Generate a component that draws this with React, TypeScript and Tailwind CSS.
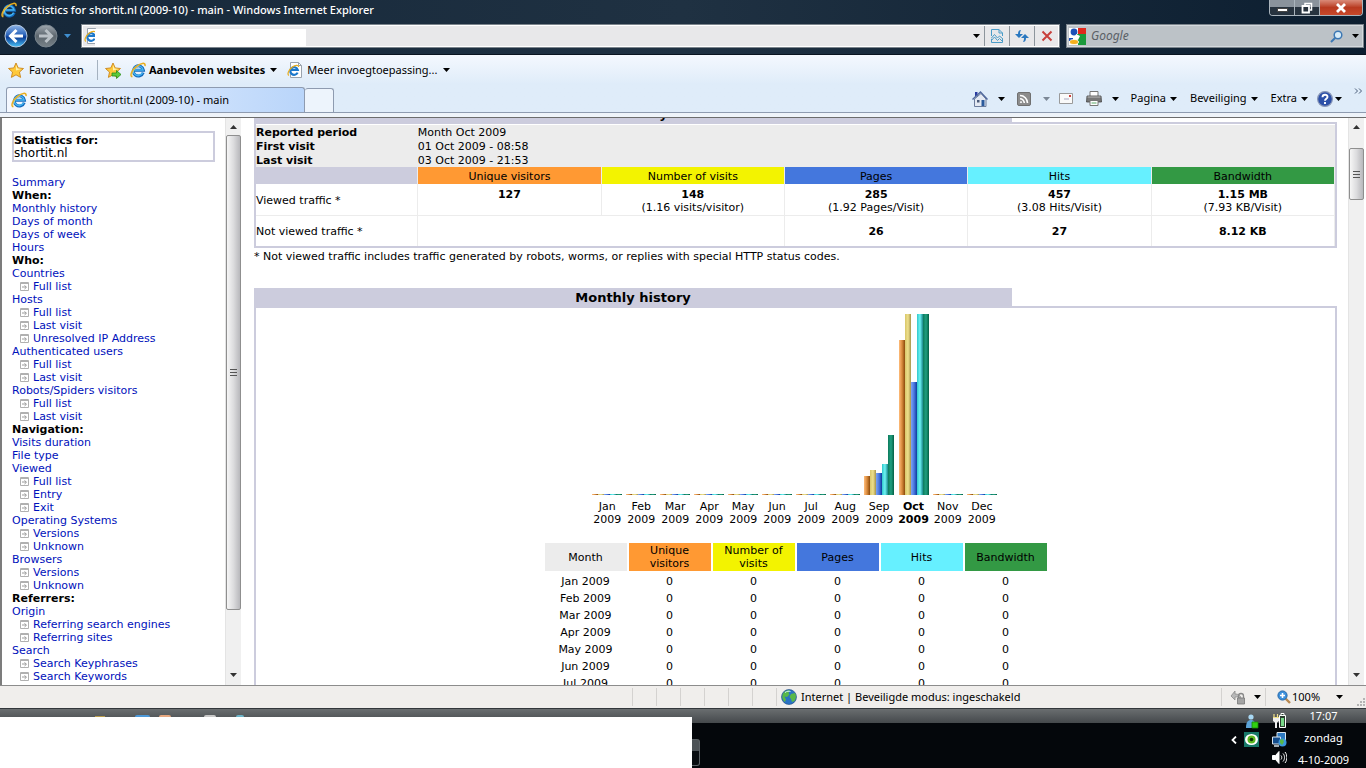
import React from "react";

type MenuItem = {
  label: string;
  kind: "link" | "sub" | "heading";
};

type Month = {
  name: string;
  bars: number[];
  current?: boolean;
};

const heading = (label: string): MenuItem => ({ label, kind: "heading" });
const link = (label: string): MenuItem => ({ label, kind: "link" });
const sub = (label: string): MenuItem => ({ label, kind: "sub" });

const menu: MenuItem[] = [
  link("Summary"),
  heading("When:"),
  link("Monthly history"),
  link("Days of month"),
  link("Days of week"),
  link("Hours"),
  heading("Who:"),
  link("Countries"),
  sub("Full list"),
  link("Hosts"),
  sub("Full list"),
  sub("Last visit"),
  sub("Unresolved IP Address"),
  link("Authenticated users"),
  sub("Full list"),
  sub("Last visit"),
  link("Robots/Spiders visitors"),
  sub("Full list"),
  sub("Last visit"),
  heading("Navigation:"),
  link("Visits duration"),
  link("File type"),
  link("Viewed"),
  sub("Full list"),
  sub("Entry"),
  sub("Exit"),
  link("Operating Systems"),
  sub("Versions"),
  sub("Unknown"),
  link("Browsers"),
  sub("Versions"),
  sub("Unknown"),
  heading("Referrers:"),
  link("Origin"),
  sub("Referring search engines"),
  sub("Referring sites"),
  link("Search"),
  sub("Search Keyphrases"),
  sub("Search Keywords"),
];

const empty = [1, 1, 1, 1, 1];

const months: Month[] = [
  { name: "Jan", bars: empty },
  { name: "Feb", bars: empty },
  { name: "Mar", bars: empty },
  { name: "Apr", bars: empty },
  { name: "May", bars: empty },
  { name: "Jun", bars: empty },
  { name: "Jul", bars: empty },
  { name: "Aug", bars: empty },
  { name: "Sep", bars: [19, 25, 22, 31, 60] },
  { name: "Oct", bars: [155, 181, 113, 181, 181], current: true },
  { name: "Nov", bars: empty },
  { name: "Dec", bars: empty },
];

const barColors = [
  "from-[#ffbd7a] via-[#d98a3c] to-[#8a4a08]",
  "from-[#d8c66a] via-[#eee08c] to-[#a8954a]",
  "from-[#7ea4f4] via-[#4a78e0] to-[#0c3a9c]",
  "from-[#30c8cc] via-[#6cf4f4] to-[#18888c]",
  "from-[#0c7a5c] via-[#20a080] to-[#046044]",
];

const columns = [
  { label: "Unique visitors", color: "bg-[#ff9933]" },
  { label: "Number of visits", color: "bg-[#f3f300]" },
  { label: "Pages", color: "bg-[#4477dd]" },
  { label: "Hits", color: "bg-[#66f0ff]" },
  { label: "Bandwidth", color: "bg-[#339944]" },
];

const viewed = [
  ["127", ""],
  ["148", "(1.16 visits/visitor)"],
  ["285", "(1.92 Pages/Visit)"],
  ["457", "(3.08 Hits/Visit)"],
  ["1.15 MB", "(7.93 KB/Visit)"],
];

const Caret = ({ className = "text-black" }: { className?: string }) => (
  <svg viewBox="0 0 7 4" className={`w-[7px] h-1 shrink-0 ${className}`} fill="currentColor">
    <path d="M0 0h7L3.5 4z" />
  </svg>
);

const IeLogo = ({ className = "w-4 h-4" }: { className?: string }) => (
  <svg viewBox="0 0 16 16" className={`shrink-0 ${className}`} fill="none">
    <path d="M13.2 10.6A5.1 5.1 0 1 1 13.4 8.2H4.2" stroke="#1269bd" strokeWidth="3" />
    <path d="M12.6 10.8A4.9 4.9 0 1 1 13 7.9H4.6" stroke="#45b4f0" strokeWidth="1.5" />
    <path d="M2.4 14.8C-.8 14 2 7.600 6.500 4.300 10.500 1.200 15.800-.3 15 4.200" stroke="#e8ae20" strokeWidth="1.500" />
    <path d="M2.200 13.800c-.6-3 2.800-7.600 6.600-9.900" stroke="#ffe37a" strokeWidth=".6" />
  </svg>
);

const PageLogo = () => (
  <svg viewBox="0 0 16 16" className="w-4 h-4 shrink-0" fill="none">
    <path d="M3.500.5h8l3 3v12h-11z" fill="#fff" stroke="#9aa3ad" />
    <path d="M11.500.5v3h3" stroke="#9aa3ad" />
    <path d="M10.600 10.600A3.800 3.800 0 1 1 10.800 8H3.500" stroke="#1b78cc" strokeWidth="2.200" />
    <path d="M1.800 13.500C-.2 12 2 7.600 5 5.200 8 3.200 12 2.400 11.600 5" stroke="#e8ae20" strokeWidth="1.200" />
  </svg>
);

const Star = ({ add }: { add?: boolean }) => (
  <svg viewBox="0 0 17 17" className="w-[17px] h-[17px] shrink-0">
    <path d="M8 1l2.200 4.900 5.300.6-4 3.600 1.100 5.300L8 12.800l-4.600 2.600 1.100-5.300-4-3.600 5.300-.6z" fill="#ffc93a" stroke="#c9851a" strokeWidth=".9" />
    <path d="M8 3l1.500 3.600 3.800.4L8 8.500z" fill="#fff0a8" />
    {add && <path d="M7 11h4.500V8.500l4.500 4-4.500 4V14H7z" fill="#5dcb3c" stroke="#2b8a18" strokeWidth=".8" />}
  </svg>
);

const Globe = () => (
  <svg viewBox="0 0 16 16" className="w-4 h-4 shrink-0">
    <circle cx="8" cy="8" r="7.500" fill="#2a72c4" stroke="#1d4a80" strokeWidth=".6" />
    <path d="M2 4.500C4 1.500 7 .9 9 1.300L7.500 4l1 1.500L6 8 3.500 7.500 5 10.500 4 13C1.500 11 .5 8 2 4.500zM10 5l4-1c1.500 2.500 1.200 5.500-.5 8l-2.500 1-1-3-1.500-2z" fill="#58b848" />
    <path d="M4 3.500C6 2 8 2 9.500 2.600" stroke="#d6f2ff" strokeWidth="1" fill="none" />
  </svg>
);

const NavButtons = () => (
  <div className="flex items-center w-[77px] pl-1 gap-[6px]">
    <button aria-label="Terug">
      <svg viewBox="0 0 24 24" className="w-6 h-6">
        <defs>
          <linearGradient id="back" x1="0" y1="0" x2="0" y2="1">
            <stop offset="0" stopColor="#8fb6e8" />
            <stop offset=".45" stopColor="#2a64bc" />
            <stop offset=".55" stopColor="#0a3a94" />
            <stop offset="1" stopColor="#4ac4f8" />
          </linearGradient>
        </defs>
        <circle cx="12" cy="12" r="11" fill="url(#back)" stroke="#b8cbe0" />
        <path d="M12.500 6L6.500 12l6 6M7 12h12" stroke="#fff" strokeWidth="3" fill="none" />
      </svg>
    </button>
    <button aria-label="Vooruit">
      <svg viewBox="0 0 24 24" className="w-6 h-6">
        <defs>
          <linearGradient id="fwd" x1="0" y1="0" x2="0" y2="1">
            <stop offset="0" stopColor="#a0a8b0" />
            <stop offset=".5" stopColor="#5c666e" />
            <stop offset="1" stopColor="#788288" />
          </linearGradient>
        </defs>
        <circle cx="12" cy="12" r="11" fill="url(#fwd)" stroke="#7a868f" />
        <path d="M11.500 6l6 6-6 6M17 12H5" stroke="#b9c0c6" strokeWidth="3" fill="none" />
      </svg>
    </button>
    <button aria-label="Recente pagina's">
      <Caret className="text-[#3f8fd0]" />
    </button>
  </div>
);

const WindowButtons = () => (
  <div className="flex h-4 mr-[3px] border border-t-0 border-[#aab4bc] rounded-b-[4px] overflow-hidden">
    <button aria-label="Minimaliseren" className="w-[25px] flex items-center justify-center border-r border-[#aab4bc] bg-linear-to-b from-[#8a939c] from-50% to-[#27333f] to-50%">
      <span className="w-[11px] h-1 mt-1 bg-white border border-[#444]" />
    </button>
    <button aria-label="Verkleinen" className="w-[25px] flex items-center justify-center border-r border-[#aab4bc] bg-linear-to-b from-[#8a939c] from-50% to-[#27333f] to-50%">
      <svg viewBox="0 0 12 12" className="w-3 h-3" fill="none">
        <path d="M4 3V1.500h6.500V8H9" stroke="#fff" strokeWidth="1.500" />
        <path d="M1.500 4h6.500v6.500H1.500z" stroke="#fff" strokeWidth="1.800" />
        <path d="M4 6.500h1.500V8H4z" fill="#333" />
      </svg>
    </button>
    <button aria-label="Sluiten" className="w-[42px] flex items-center justify-center bg-linear-to-b from-[#d98a78] via-[#b83a20] to-[#c8482a]">
      <svg viewBox="0 0 12 10" className="w-3 h-[10px]">
        <path d="M2 1l8 8M10 1L2 9" stroke="#fff" strokeWidth="2.800" />
      </svg>
    </button>
  </div>
);

const AddressRow = () => (
  <div className="flex items-center h-[30px] pb-[6px] pr-[2px] gap-1">
    <NavButtons />
    <div className="flex flex-1 h-6 border border-[#7b848c] bg-[#e8e8ea] outline outline-1 -outline-offset-2 outline-white">
      <div className="flex flex-1 items-center pl-[2px]">
        <PageLogo />
        <input aria-label="Adres" className="w-[211px] h-[17px] -ml-[5px] mt-[2px] bg-white z-10 outline-none" />
      </div>
      <button aria-label="Adressen" className="w-4 flex items-center justify-center">
        <Caret />
      </button>
      <button aria-label="Compatibiliteitsweergave" className="w-[25px] flex items-center justify-center border-l border-[#8d959c]">
        <svg viewBox="0 0 12 14" className="w-3 h-[14px]" fill="none" stroke="#4a9cc8">
          <path d="M.5 7V.5h7.500l3.500 3.500v3M.5 10v3.500h11V10M8 .5V4h3.500" />
          <path d="M0 9.500L3.500 5.500 6.500 9 8.500 7 12 10M0 12l3.500-4 3 3.500L8.500 9.500 11 12" />
        </svg>
      </button>
      <button aria-label="Vernieuwen" className="w-[25px] flex items-center justify-center border-l border-[#8d959c]">
        <svg viewBox="0 0 14 14" className="w-[14px] h-[14px]" fill="#2a78c0">
          <path d="M6 1C4 1 3 2.500 3 5H0l4 4 4-4H5c0-1.500.2-2.500 1-4zM8 13c2 0 3-1.500 3-4h3l-4-4-4 4h3c0 1.500-.2 2.500-1 4z" />
        </svg>
      </button>
      <button aria-label="Stoppen" className="w-[25px] flex items-center justify-center border-l border-[#8d959c]">
        <svg viewBox="0 0 12 12" className="w-3 h-3">
          <path d="M1.500 1.500l9 9M10.500 1.500l-9 9" stroke="#c8403c" strokeWidth="2" />
        </svg>
      </button>
    </div>
    <div className="flex items-center w-[298px] h-6 ml-[2px] pl-[2px] pr-1 border border-[#7b848c] bg-[#bcc2c7] outline outline-1 -outline-offset-2 outline-[#d4d9dd]">
      <svg viewBox="0 0 17 17" className="w-[17px] h-[17px] shrink-0">
        <path d="M0 0h17v17H0z" fill="#fff" />
        <path d="M9 0h8v6H9z" fill="#e0281c" />
        <path d="M8 6h9v11H9z" fill="#1b9a3c" />
        <path d="M0 10h4v3H0z" fill="#1c50b8" />
        <circle cx="5" cy="4" r="3.400" fill="#1c50b8" />
        <path d="M7 6l4 2-2 4-3-2z" fill="#fff" />
        <ellipse cx="5" cy="14" rx="4.500" ry="2.500" fill="#f4b01c" stroke="#fff" strokeWidth=".8" />
      </svg>
      <input
        aria-label="Zoeken"
        placeholder="Google"
        className="flex-1 min-w-0 px-[5px] text-[12px] italic bg-transparent outline-none placeholder:text-[#5a6066]"
      />
      <button aria-label="Zoek" className="mr-[9px]">
        <svg viewBox="0 0 13 13" className="w-[13px] h-[13px]" fill="none">
          <circle cx="8" cy="5" r="3.800" fill="#d8ecf8" stroke="#3c78b4" strokeWidth="1.500" />
          <path d="M5.300 7.700L1 12" stroke="#3c78b4" strokeWidth="2" />
        </svg>
      </button>
      <button aria-label="Zoekopties">
        <Caret />
      </button>
    </div>
  </div>
);

const FavoritesBar = () => (
  <div className="flex items-center h-[30px] pl-2 text-[11px] text-black">
    <button className="flex items-center gap-1 w-[76px] h-6">
      <Star />
      Favorieten
    </button>
    <span className="w-px h-5 ml-[13px] mr-[7px] bg-[#a5b2c0]" />
    <button aria-label="Toevoegen aan favorieten" className="mr-2">
      <Star add />
    </button>
    <button className="flex items-center gap-[3px] mr-[10px] font-bold">
      <IeLogo />
      <span className="mr-[2px]">Aanbevolen websites</span>
      <Caret />
    </button>
    <button className="flex items-center gap-1">
      <PageLogo />
      <span className="mr-[2px]">Meer invoegtoepassing...</span>
      <Caret />
    </button>
  </div>
);

const CommandBar = () => (
  <div className="flex items-center self-stretch pr-[3px] text-[11px] text-black">
    <button aria-label="Startpagina" className="mr-[10px]">
      <svg viewBox="0 0 16 16" className="w-4 h-4">
        <path d="M3 1h2.500v4H3z" fill="#2a3aa0" />
        <path d="M2.500 8L9 2.500 14 8v7.500H2.500z" fill="#e4e9f2" stroke="#6c7c9c" />
        <path d="M.5 8.500L8.500 1 15.500 8.500" fill="none" stroke="#51689c" strokeWidth="1.400" />
        <path d="M9.500 9h3v6h-3z" fill="#2a5a9c" />
        <path d="M5 9h2.500v2.500H5z" fill="#4a5a78" />
      </svg>
    </button>
    <Caret />
    <button aria-label="Feeds" className="ml-3 mr-3">
      <svg viewBox="0 0 14 14" className="w-[14px] h-[14px]" fill="none" stroke="#fff" strokeWidth="1.600">
        <rect x=".5" y=".5" width="13" height="13" rx="1.500" fill="#8c8c8c" stroke="#707070" strokeWidth="1" />
        <path d="M3 3.500a7.500 7.500 0 0 1 7.500 7.500M3 6.700A4.300 4.300 0 0 1 7.300 11" />
        <circle cx="4" cy="10.200" r=".6" fill="#fff" strokeWidth="1" />
      </svg>
    </button>
    <Caret className="text-[#7c8896]" />
    <button aria-label="E-mail lezen" className="ml-[9px] mr-[13px]">
      <svg viewBox="0 0 14 11" className="w-[14px] h-[11px]">
        <path d="M.5.5h13v10H.5z" fill="#fafafa" stroke="#9a9a9a" />
        <path d="M10 2h2v2h-2z" fill="#d0403c" />
        <path d="M5 6h5" stroke="#a8a8c0" />
      </svg>
    </button>
    <button aria-label="Afdrukken" className="mr-[10px]">
      <svg viewBox="0 0 16 15" className="w-4 h-[15px]">
        <path d="M4 .5h8V6H4z" fill="#fff" stroke="#777" />
        <path d="M1 5h14l.5 6H.5z" fill="#787878" stroke="#444" strokeWidth=".8" />
        <path d="M1.500 6h13" stroke="#bbb" />
        <path d="M4 9.500h8v5H4z" fill="#fff" stroke="#777" />
        <path d="M5.500 12h5" stroke="#58a868" />
      </svg>
    </button>
    <Caret />
    <button className="flex items-center gap-1 ml-3">Pagina<Caret /></button>
    <button className="flex items-center gap-1 ml-[13px]">Beveiliging<Caret /></button>
    <button className="flex items-center gap-1 ml-[13px]">Extra<Caret /></button>
    <button aria-label="Help" className="flex items-center gap-[2px] ml-[9px]">
      <svg viewBox="0 0 16 16" className="w-4 h-4">
        <circle cx="8" cy="8" r="7.400" fill="#2c50a8" stroke="#8a98b8" strokeWidth="1.200" />
        <path d="M5.500 6.200C5.500 2.800 10.600 3 10.500 6 10.400 7.800 8 7.800 8 9.800M8 11v2" stroke="#fff" strokeWidth="1.900" fill="none" />
      </svg>
      <Caret />
    </button>
    <button aria-label="Meer" className="ml-3 mb-4">
      <svg viewBox="0 0 9 6" className="w-[9px] h-[6px]" fill="none" stroke="#4a5c78">
        <path d="M1 .5L3.500 3 1 5.500M5 .5L7.500 3 5 5.500" />
      </svg>
    </button>
  </div>
);

const TabRow = () => (
  <div className="flex items-end h-7 pl-[6px] border-b border-[#8e9bb0]">
    <button className="flex items-center gap-[3px] w-[299px] h-[25px] pl-1 text-[11px] text-black border border-b-0 border-[#8e9bb0] rounded-t-[3px] bg-linear-to-r from-[#f4f8ff] to-[#b9d5fa]">
      <IeLogo />
      Statistics for shortit.nl (2009-10) - main
    </button>
    <button aria-label="Nieuw tabblad" className="w-[29px] h-6 border border-l-0 border-b-0 border-[#8e9bb0] rounded-t-[3px] bg-[#edf4fc]" />
    <span className="flex-1" />
    <CommandBar />
  </div>
);

const Scrollbar = ({ thumb }: { thumb: string }) => (
  <div className="flex flex-col items-center w-4 shrink-0 bg-[#f0f0f0] border-l border-[#e4e4e4]">
    <button aria-label="Omhoog" className="h-[17px] flex items-center">
      <Caret className="text-[#333] rotate-180" />
    </button>
    <div className={`w-[15px] flex items-center justify-center border border-[#8f8f8f] rounded-[2px] bg-linear-to-r from-[#f6f6f6] via-[#dcdcde] to-[#b8b8bc] ${thumb}`}>
      <span className="w-[7px] h-[7px] border-y border-[#555] flex items-center">
        <span className="w-full h-px bg-[#555]" />
      </span>
    </div>
    <span className="flex-1" />
    <button aria-label="Omlaag" className="h-5 flex items-center">
      <Caret className="text-[#333]" />
    </button>
  </div>
);

const Sidebar = () => (
  <aside className="flex w-[241px] shrink-0 border-l-2 border-[#7c7c7c] overflow-hidden">
    <nav className="flex-1 pl-[10px] pr-[10px] pt-[13px]">
      <div className="h-[31px] border-2 border-[#ccccdd] leading-[13px]">
        <p className="pt-px text-[11px] font-bold">Statistics for:</p>
        <p className="text-[12px]">shortit.nl</p>
      </div>
      <ul className="mt-[14px] text-[11px] leading-[13px]">
        {menu.map((item, index) => (
          <li key={index} className={item.kind === "sub" ? "flex items-center pl-2 gap-1" : ""}>
            {item.kind === "heading" && <b>{item.label}</b>}
            {item.kind === "sub" && (
              <svg viewBox="0 0 9 9" className="w-[9px] h-[9px] shrink-0" fill="none">
                <path d="M.5.5h8v8h-8zM0 1.500h9" stroke="#b0b0b0" />
                <path d="M2 5h4M4.500 3.500L6.500 5.200 4.500 7" stroke="#9a9a9a" />
              </svg>
            )}
            {item.kind !== "heading" && (
              <a href="#" className="text-[#0011bb] whitespace-nowrap">{item.label}</a>
            )}
          </li>
        ))}
      </ul>
    </nav>
    <Scrollbar thumb="h-[475px]" />
  </aside>
);

const SectionTitle = ({ children }: { children: string }) => (
  <h2 className="w-[70%] h-[18px] bg-[#ccccdd] text-[13px] leading-[19px] font-bold text-center shrink-0">{children}</h2>
);

const SummaryTable = () => (
  <table className="w-full table-fixed border-collapse text-[11px] leading-[13px] text-center">
    <colgroup>
      <col className="w-[15%]" />
      <col className="w-[17%]" />
      <col className="w-[17%]" />
      <col className="w-[17%]" />
      <col className="w-[17%]" />
      <col className="w-[17%]" />
    </colgroup>
    <tbody>
      {[
        ["Reported period", "Month Oct 2009"],
        ["First visit", "01 Oct 2009 - 08:58"],
        ["Last visit", "03 Oct 2009 - 21:53"],
      ].map(([label, value]) => (
        <tr key={label} className="h-[14px] bg-[#ececec] text-left">
          <th className="p-0 font-bold">{label}</th>
          <td className="p-0" colSpan={5}>{value}</td>
        </tr>
      ))}
      <tr className="h-[17px]">
        <td className="bg-[#ccccdd] border-r border-[#ececec]" />
        {columns.map((column) => (
          <th key={column.label} className={`p-0 pt-[2px] font-normal border-r border-[#ececec] ${column.color}`}>{column.label}</th>
        ))}
      </tr>
      <tr className="h-[31px] border-b border-[#ececec]">
        <th className="p-0 pt-[2px] font-normal text-left border-r border-[#ececec]">Viewed traffic *</th>
        {viewed.map(([total, ratio]) => (
          <td key={total} className="p-0 pt-1 align-top border-r border-[#ececec]">
            <b>{total}</b>
            <br />
            {ratio}
          </td>
        ))}
      </tr>
      <tr className="h-[31px] font-bold">
        <th className="p-0 pt-[2px] font-normal text-left border-r border-[#ececec]">Not viewed traffic *</th>
        <td colSpan={2} className="border-r border-[#ececec]" />
        <td className="p-0 pt-[2px] border-r border-[#ececec]">26</td>
        <td className="p-0 pt-[2px] border-r border-[#ececec]">27</td>
        <td className="p-0 pt-[2px] border-r border-[#ececec]">8.12 KB</td>
      </tr>
    </tbody>
  </table>
);

const MonthlyChart = () => (
  <div className="flex justify-center gap-1 pt-[6px] pr-[2px] text-[11px] leading-[13px] text-center">
    {months.map((month) => (
      <div key={month.name} className="flex flex-col items-center min-w-[30px]">
        <div className="flex items-end h-[181px] mb-[5px]">
          {month.bars.map((height, index) => (
            <span key={index} className={`w-[6px] bg-linear-to-r ${barColors[index]}`} style={{ height }} />
          ))}
        </div>
        <span className={month.current ? "font-bold" : ""}>
          {month.name}
          <br />
          2009
        </span>
      </div>
    ))}
  </div>
);

const MonthlyTable = () => (
  <table className="mx-auto mt-[17px] w-[506px] table-fixed border-separate border-spacing-x-[2px] border-spacing-y-0 text-[11px] leading-[13px] text-center">
    <thead>
      <tr className="h-7">
        <th className="p-0 font-normal bg-[#ececec]">Month</th>
        {columns.map((column) => (
          <th key={column.label} className={`px-2 py-px font-normal ${column.color}`}>{column.label}</th>
        ))}
      </tr>
    </thead>
    <tbody>
      {months.slice(0, 7).map((month) => (
        <tr key={month.name} className="h-[17px]">
          <td className="p-0 pt-1">{month.name} 2009</td>
          {columns.map((column) => (
            <td key={column.label} className="p-0 pt-1">0</td>
          ))}
        </tr>
      ))}
    </tbody>
  </table>
);

const Report = () => (
  <main className="flex flex-1 min-w-0 overflow-hidden">
    <div className="flex-1 pl-[13px] pr-[11px] overflow-hidden flex flex-col justify-start">
      <div className="h-1 shrink-0 flex flex-col justify-end overflow-hidden">
        <SectionTitle>Summary</SectionTitle>
      </div>
      <div className="pt-px border-2 border-[#ccccdd] shrink-0">
        <SummaryTable />
      </div>
      <p className="mt-[2px] mb-[25px] text-[11px] leading-[13px]">
        * Not viewed traffic includes traffic generated by robots, worms, or replies with special HTTP status codes.
      </p>
      <SectionTitle>Monthly history</SectionTitle>
      {/* fills the rest of the frame, the table below the fold is cut off */}
      <div className="flex-1 min-h-0 border-2 border-b-0 border-[#ccccdd]">
        <MonthlyChart />
        <MonthlyTable />
      </div>
    </div>
    <Scrollbar thumb="h-[52px] mt-[13px]" />
    <span className="w-[2px]" />
  </main>
);

const StatusBar = () => (
  <footer className="flex items-stretch h-[23px] shrink-0 border-t border-[#8c8c8c] bg-[#f0eeec] font-['Noto_Sans',sans-serif] text-[11px]">
    <span className="flex-1" />
    {[0, 1, 2, 3, 4, 5].map((cell) => (
      <span key={cell} className="w-6 my-[2px] border-l border-[#d4d2d0]" />
    ))}
    <div className="flex items-center gap-1 w-[445px] my-[2px] pl-1 border-l border-[#d4d2d0]">
      <Globe />
      Internet | Beveiligde modus: ingeschakeld
    </div>
    <button aria-label="Beveiligingsrapport" className="flex items-center w-11 my-[2px] pl-2 gap-2 border-l border-[#d4d2d0]">
      <svg viewBox="0 0 16 16" className="w-4 h-4">
        <path d="M1 7l4-5v3c4 0 6 2 6 5-2-2-3-2.500-6-2v3z" fill="#b8b8b8" stroke="#8c8c8c" strokeWidth=".8" />
        <path d="M8.500 9V7a2.500 2.500 0 0 1 5 0v2" fill="none" stroke="#888" strokeWidth="1.300" />
        <path d="M7.500 9h7v6h-7z" fill="#a4a4a4" stroke="#777" strokeWidth=".8" />
      </svg>
      <Caret />
    </button>
    <button className="flex items-center w-[91px] my-[2px] pl-[11px] border-l border-[#d4d2d0]">
      <svg viewBox="0 0 14 14" className="w-[14px] h-[14px]" fill="none">
        <path d="M8.500 8.500L13 13" stroke="#b88850" strokeWidth="2.400" />
        <circle cx="5.500" cy="5.500" r="4.600" fill="#3c90dc" stroke="#2868a8" />
        <path d="M5.500 3v5M3 5.500h5" stroke="#fff" strokeWidth="1.600" />
      </svg>
      <span className="ml-px mr-4">100%</span>
      <Caret />
    </button>
    <svg viewBox="0 0 10 10" className="w-[10px] h-[10px] self-end" fill="#b4b4b4">
      <path d="M7 0h2v2H7zM7 3h2v2H7zM7 6h2v2H7zM4 3h2v2H4zM4 6h2v2H4zM1 6h2v2H1z" />
    </svg>
  </footer>
);

const Taskbar = () => (
  <div className="flex h-[60px] shrink-0 border-t border-[#33383c] bg-linear-to-b from-[#6a6e70] from-0% via-[#45494c] via-[14px] to-[#04070b] to-[14px] font-['Noto_Sans',sans-serif] text-[11px] text-white">
    <div className="w-[692px] flex flex-col shrink-0">
      <div className="flex items-end h-2 pl-[95px]">
        <span className="w-[10px] h-px bg-[#b89c4c]" />
        <span className="w-[15px] h-[2px] ml-[30px] rounded-t bg-[#4c98d8]" />
        <span className="w-3 h-[2px] ml-[9px] rounded-t bg-[#e8a880]" />
        <span className="w-3 h-[2px] ml-[33px] rounded-t bg-[#c8c8c8]" />
        <span className="w-2 h-[2px] ml-5 rounded-t bg-[#6cb4c8]" />
      </div>
      <div className="flex-1 bg-white" />
    </div>
    <div className="w-2 h-[27px] mt-[30px] border border-l-0 border-[#5c6266] rounded-r-[3px] bg-linear-to-b from-[#4c5256] from-45% to-[#080c10] to-45%" />
    <span className="flex-1" />
    <div className="flex flex-col items-end w-[30px] pt-[5px] gap-[3px]">
      <svg viewBox="0 0 14 15" className="w-[14px] h-[15px]">
        <circle cx="6" cy="3" r="2.600" fill="#a8d8f4" />
        <path d="M1 14c0-6 2-8 5-8s5 2 5 8z" fill="#5ca4d8" />
        <path d="M7 8h6v6H7z" fill="#30d010" stroke="#188808" strokeWidth=".8" />
      </svg>
      <div className="flex items-center gap-[7px]">
        <svg viewBox="0 0 6 8" className="w-[6px] h-2" fill="none">
          <path d="M5 .5L1.500 4 5 7.500" stroke="#fff" strokeWidth="1.800" />
        </svg>
        <svg viewBox="0 0 15 15" className="w-[15px] h-[15px]">
          <path d="M0 0h15v15H0z" fill="#187868" />
          <ellipse cx="7.500" cy="7.500" rx="6.500" ry="5.500" fill="#fff" />
          <circle cx="7.500" cy="7.500" r="4" fill="#5cb820" />
          <circle cx="7.500" cy="7.500" r="1.800" fill="#0c3008" />
        </svg>
      </div>
    </div>
    <div className="flex flex-col w-7 items-end pt-1 gap-1">
      <svg viewBox="0 0 15 15" className="w-[15px] h-[15px]">
        <path d="M7.500 2.500h6v12h-6zM9 .5h3v2H9z" fill="#2c4030" stroke="#fff" />
        <path d="M9 5h3v8H9z" fill="#78d888" />
        <path d="M1 4.500h6M2 1v3M5.500 1v3" stroke="#f0e088" strokeWidth="1.200" />
        <path d="M1 5h6v3L5 9.500V15H3V9.500L1 8z" fill="#eee" />
      </svg>
      <svg viewBox="0 0 15 15" className="w-[15px] h-[15px]">
        <path d="M5 .5h8.500v8H5z" fill="#2c78c0" stroke="#d8e4ee" />
        <path d="M.5 5h8v7h-8z" fill="#144c8c" stroke="#d8e4ee" />
        <path d="M2 14h5" stroke="#d8e4ee" strokeWidth="1.500" />
        <circle cx="10.500" cy="10.500" r="4" fill="#3c98dc" />
        <path d="M8 8l3-1 1 3-2 3-2-2z" fill="#58b848" />
      </svg>
      <svg viewBox="0 0 15 13" className="w-[15px] h-[13px]" fill="none" stroke="#fff">
        <path d="M.5 4.500h3l3.500-4v12l-3.500-4h-3z" fill="#fff" />
        <path d="M9 4.500c1 1 1 3 0 4M11 2.500c2 2 2 6 0 8M13 1c2.500 3 2.500 8 0 11" />
      </svg>
    </div>
    <div className="flex flex-col items-center w-[73px] -mt-1 leading-[22px]">
      <span>17:07</span>
      <span>zondag</span>
      <span>4-10-2009</span>
    </div>
    <span className="w-[6px]" />
  </div>
);

const App = () => {
  return (
    <div className="flex flex-col h-screen overflow-hidden bg-white text-black font-['DejaVu_Sans',Verdana,sans-serif]">
      <header className="shrink-0 font-['Noto_Sans',sans-serif]">
        <div className="bg-linear-to-r from-[#16283a] via-[#1f3142] to-[#0c1e30] border-b border-[#0a1420]">
          <div className="flex items-start h-6 pl-[1px]">
            <div className="flex items-center h-5 gap-1 flex-1 text-[11px] font-medium text-white">
              <IeLogo />
              <h1>Statistics for shortit.nl (2009-10) - main - Windows Internet Explorer</h1>
            </div>
            <WindowButtons />
          </div>
          <AddressRow />
        </div>
        <div className="bg-linear-to-b from-[#f4f8fe] to-[#dfecf9] to-50%">
          <FavoritesBar />
          <TabRow />
        </div>
        <div className="h-1 bg-[#eef3f9]" />
      </header>
      <div className="flex flex-1 min-h-0 border-t border-[#6c6c6c]">
        <Sidebar />
        <Report />
      </div>
      <StatusBar />
      <Taskbar />
    </div>
  );
};

export default App;
